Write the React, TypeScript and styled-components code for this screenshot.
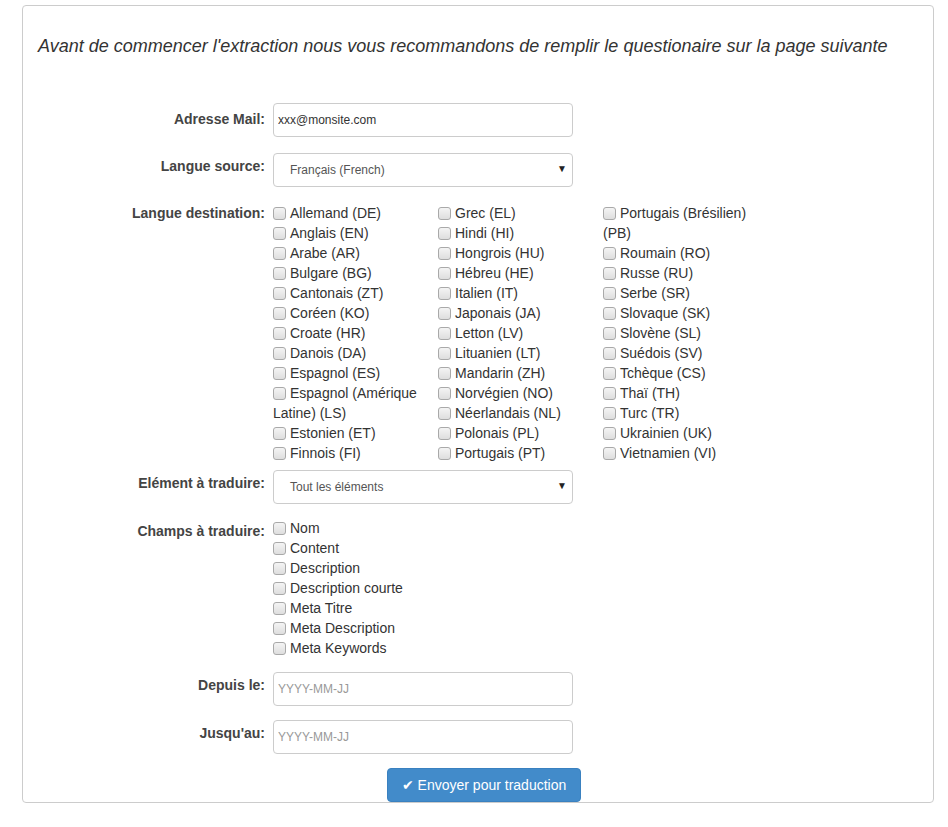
import React from "react";
import styled, { createGlobalStyle } from "styled-components";

const GlobalStyle = createGlobalStyle`
  html, body {
    margin: 0;
    padding: 0;
    background: #fff;
    font-family: "Liberation Sans", Arial, sans-serif;
    font-size: 14px;
    color: #333;
  }
  * {
    box-sizing: border-box;
  }
`;

const Panneau = styled.div`
  margin: 5px 14px 0 22px;
  width: 912px;
  height: 798px;
  border: 1px solid #ccc;
  border-radius: 4px;
  padding: 27px 15px 0 15px;
`;

const Titre = styled.h4`
  margin: 0 0 44px 0;
  font-size: 18px;
  font-style: italic;
  font-weight: 400;
  line-height: 26px;
  color: #333;
  white-space: nowrap;
`;

const Formulaire = styled.form`
  display: flex;
  flex-direction: column;
`;

const Ligne = styled.div<{ $espace: number }>`
  display: grid;
  grid-template-columns: 227px 1fr;
  column-gap: 8px;
  margin-bottom: ${(p) => p.$espace}px;
`;

const Etiquette = styled.label<{ $haut?: number }>`
  text-align: right;
  font-weight: 700;
  font-size: 14px;
  line-height: 20px;
  color: #444;
  padding-top: ${(p) => p.$haut ?? 3}px;
  white-space: nowrap;
`;

const Champ = styled.input`
  width: 300px;
  height: 34px;
  border: 1px solid #ccc;
  border-radius: 4px;
  padding: 0 4px;
  font-family: "Liberation Sans", Arial, sans-serif;
  font-size: 12px;
  color: #333;
  background: #fff;
  outline: none;
  &::placeholder {
    color: #999;
  }
`;

const SelectBoite = styled.div`
  position: relative;
  width: 300px;
  height: 34px;
  border: 1px solid #ccc;
  border-radius: 4px;
  display: flex;
  align-items: center;
  padding-left: 16px;
  font-size: 12px;
  color: #555;
  background: #fff;
`;

const Fleche = styled.span`
  position: absolute;
  right: 5px;
  top: 9px;
  font-size: 10px;
  color: #222;
`;

const Grille = styled.div`
  display: grid;
  grid-template-columns: 165px 165px 165px;
  padding-top: 7px;
`;

const Colonne = styled.div`
  display: flex;
  flex-direction: column;
`;

const Liste = styled.div`
  display: flex;
  flex-direction: column;
  padding-top: 7px;
`;

const Option = styled.label`
  display: block;
  font-size: 14px;
  line-height: 20px;
  color: #333;
`;

const Case = styled.input`
  appearance: none;
  width: 13px;
  height: 13px;
  margin: 0 4px 0 0;
  vertical-align: -2px;
  border: 1px solid #a9a9a9;
  border-radius: 3px;
  background: linear-gradient(#f4f4f4, #dedede);
`;

const Bouton = styled.button`
  margin-left: 114px;
  height: 34px;
  width: 194px;
  padding: 0 12px;
  border: 1px solid #3a81c0;
  border-radius: 4px;
  background: #428bca;
  color: #fff;
  font-family: "Liberation Sans", Arial, sans-serif;
  font-size: 14px;
  white-space: nowrap;
`;

const colonnes = [
  [
    "Allemand (DE)",
    "Anglais (EN)",
    "Arabe (AR)",
    "Bulgare (BG)",
    "Cantonais (ZT)",
    "Coréen (KO)",
    "Croate (HR)",
    "Danois (DA)",
    "Espagnol (ES)",
    "Espagnol (Amérique Latine) (LS)",
    "Estonien (ET)",
    "Finnois (FI)",
  ],
  [
    "Grec (EL)",
    "Hindi (HI)",
    "Hongrois (HU)",
    "Hébreu (HE)",
    "Italien (IT)",
    "Japonais (JA)",
    "Letton (LV)",
    "Lituanien (LT)",
    "Mandarin (ZH)",
    "Norvégien (NO)",
    "Néerlandais (NL)",
    "Polonais (PL)",
    "Portugais (PT)",
  ],
  [
    "Portugais (Brésilien) (PB)",
    "Roumain (RO)",
    "Russe (RU)",
    "Serbe (SR)",
    "Slovaque (SK)",
    "Slovène (SL)",
    "Suédois (SV)",
    "Tchèque (CS)",
    "Thaï (TH)",
    "Turc (TR)",
    "Ukrainien (UK)",
    "Vietnamien (VI)",
  ],
];

const champs = [
  "Nom",
  "Content",
  "Description",
  "Description courte",
  "Meta Titre",
  "Meta Description",
  "Meta Keywords",
];

const App = () => {
  return (
    <>
      <GlobalStyle />
      <Panneau>
        <Titre>
          Avant de commencer l'extraction nous vous recommandons de remplir le
          questionaire sur la page suivante
        </Titre>
        <Formulaire onSubmit={(e) => e.preventDefault()}>
          <Ligne $espace={16}>
            <Etiquette $haut={6}>Adresse Mail:</Etiquette>
            <Champ type="email" defaultValue="xxx@monsite.com" />
          </Ligne>
          <Ligne $espace={9}>
            <Etiquette>Langue source:</Etiquette>
            <SelectBoite>
              Français (French)
              <Fleche>▼</Fleche>
            </SelectBoite>
          </Ligne>
          <Ligne $espace={7}>
            <Etiquette $haut={7}>Langue destination:</Etiquette>
            <Grille>
              {colonnes.map((col, i) => (
                <Colonne key={i}>
                  {col.map((langue) => (
                    <Option key={langue}>
                      <Case type="checkbox" />
                      {langue}
                    </Option>
                  ))}
                </Colonne>
              ))}
            </Grille>
          </Ligne>
          <Ligne $espace={7}>
            <Etiquette>Elément à traduire:</Etiquette>
            <SelectBoite>
              Tout les éléments
              <Fleche>▼</Fleche>
            </SelectBoite>
          </Ligne>
          <Ligne $espace={14}>
            <Etiquette $haut={10}>Champs à traduire:</Etiquette>
            <Liste>
              {champs.map((c) => (
                <Option key={c}>
                  <Case type="checkbox" />
                  {c}
                </Option>
              ))}
            </Liste>
          </Ligne>
          <Ligne $espace={14}>
            <Etiquette>Depuis le:</Etiquette>
            <Champ type="text" placeholder="YYYY-MM-JJ" />
          </Ligne>
          <Ligne $espace={14}>
            <Etiquette>Jusqu'au:</Etiquette>
            <Champ type="text" placeholder="YYYY-MM-JJ" />
          </Ligne>
          <Ligne $espace={0}>
            <span />
            <Bouton type="submit">✔ Envoyer pour traduction</Bouton>
          </Ligne>
        </Formulaire>
      </Panneau>
    </>
  );
};

export default App;
